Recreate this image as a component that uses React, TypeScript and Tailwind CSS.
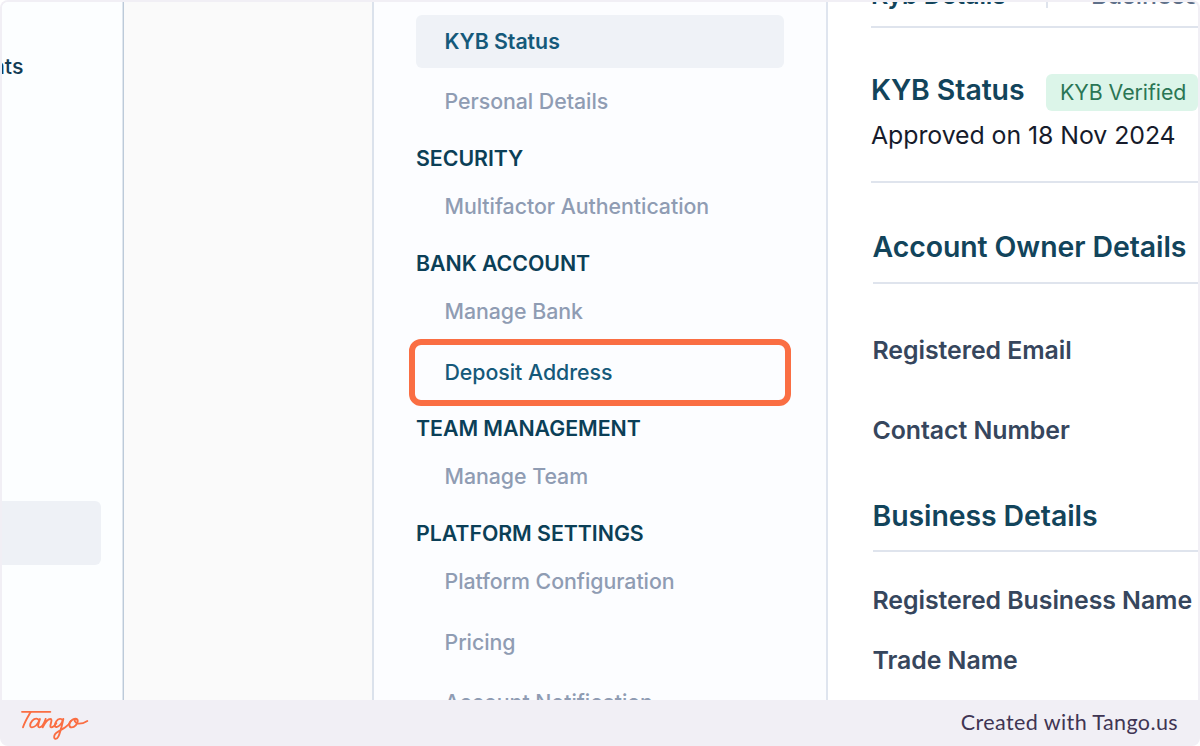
import type { ReactNode } from "react";

function Group({ children }: { children: ReactNode }) {
  return (
    <h3 className="mt-[16px] mb-[6px] flex h-[30px] shrink-0 items-center text-[21.33px] font-semibold tracking-[-0.04px] text-[#0b3f57]">
      {children}
    </h3>
  );
}

function Item({ children }: { children: ReactNode }) {
  return (
    <div className="flex h-[53px] shrink-0 items-center pl-[28.5px] text-[21.33px] font-medium tracking-[-0.04px] text-[#8f9cb3]">
      {children}
    </div>
  );
}

function Label({ children }: { children: ReactNode }) {
  return (
    <div className="flex h-[30px] shrink-0 items-center text-[24.89px] font-semibold tracking-[-0.06px] text-[#36465d]">
      {children}
    </div>
  );
}

function TangoLogo() {
  return (
    <svg
      width="90"
      height="46"
      viewBox="0 0 270 138"
      fill="none"
      stroke="#fa6e43"
      strokeWidth="5.6"
      strokeLinecap="round"
      strokeLinejoin="round"
      aria-label="Tango"
    >
      <path d="M36 35.500H121" />
      <path d="M62 36C54 50 44 66 39 82" />
      <path d="M88 63C84 53 74 54 67 62C59 71 58 82 66 82C75 82 84 71 90 57C86 68 81 82 88 82C95 82 103 68 107 57C104 66 100 75 98 82C104 70 113 57 121 57C131 57 115 82 124 82C130 82 135 76 139 70" />
      <path d="M158 62C155 54 145 55 139 64C132 75 133 82 140 81C148 80 156 68 160 57C156 75 152 96 145 110C140 120 130 118 133 107C136 95 153 91 166 82C175 76 179 70 182 63" />
      <path d="M200 57C189 54 179 64 178 74C178 85 190 84 197 76C204 68 206 58 198 57C190 58 194 70 207 71C217 71 226 67 232 63" />
    </svg>
  );
}

export default function App() {
  return (
    <div className="h-[746px] w-[1200px] overflow-hidden rounded-lg bg-[#f1eff5] px-[2px] pt-[2px] font-[Inter,sans-serif]">
      <div className="flex h-[698px] w-[1196px] overflow-hidden rounded-t-md bg-white">
        <aside className="flex w-[121px] shrink-0 flex-col overflow-hidden border-r border-[#dfe6ee] bg-[#fcfeff]">
          <div className="mt-[50px] -ml-[10px] flex h-[30px] items-center text-[21.33px] font-medium text-[#123c55]">nts</div>
          <div className="mt-[419px] h-[64px] w-[99px] shrink-0 rounded-r-md bg-[#eef1f6]" />
        </aside>
        <div className="w-[249px] shrink-0 border-l border-[#bccad9] bg-[#fafafa]" />
        <nav className="flex w-[456px] shrink-0 flex-col overflow-hidden border-r-2 border-l-2 border-r-[#dfe5ef] border-l-[#dbe2ec] bg-[#fcfdff] pt-[13px] pr-[42px] pl-[42px]">
          <div className="mb-[7px] flex h-[53px] shrink-0 items-center rounded-md bg-[#eff2f7] pl-[28.5px] text-[21.33px] font-semibold tracking-[-0.04px] text-[#15597a]">
            KYB Status
          </div>
          <Item>Personal Details</Item>
          <Group>SECURITY</Group>
          <Item>Multifactor Authentication</Item>
          <Group>BANK ACCOUNT</Group>
          <Item>Manage Bank</Item>
          <div className="-mx-[7px] mt-px -mb-[8px] flex h-[67px] shrink-0 items-center rounded-xl border-6 border-[#fa6e43] pl-[29.5px] text-[21.33px] font-medium tracking-[-0.04px] text-[#15597a]">
            Deposit Address
          </div>
          <Group>TEAM MANAGEMENT</Group>
          <Item>Manage Team</Item>
          <Group>PLATFORM SETTINGS</Group>
          <Item>Platform Configuration</Item>
          <div className="h-2 shrink-0" />
          <Item>Pricing</Item>
          <div className="h-[7px] shrink-0" />
          <Item>Account Notification</Item>
        </nav>
        <main className="flex w-[370px] shrink-0 flex-col overflow-hidden pl-[43px]">
          <div className="flex h-[26px] shrink-0 border-b-2 border-[#dfe4ed] text-[24.89px] leading-[30px]">
            <div className="-mt-[22px] w-[175px] shrink-0 font-semibold tracking-[-0.06px] text-[#12445b]">Kyb Details</div>
            <div className="h-[6px] w-[2px] shrink-0 bg-[#dfe4ed]" />
            <div className="-mt-[22px] ml-[43px] font-medium text-[#5f7089]">Business</div>
          </div>
          <div className="mt-[46px] flex h-[37px] shrink-0 items-center">
            <h1 className="-mt-[5px] w-[175px] shrink-0 text-[28.44px] font-semibold tracking-[-0.08px] text-[#12445b]">KYB Status</h1>
            <div className="flex h-[37px] w-[152px] shrink-0 items-center rounded-md bg-[#dcf5e9] pl-[14px] text-[21.33px] tracking-[-0.05px] text-[#2a7654]">
              KYB Verified
            </div>
          </div>
          <p className="mt-[8px] h-[32px] shrink-0 text-[24.89px] leading-[32px] tracking-[-0.07px] text-[#161b2b]">
            Approved on 18 Nov 2024
          </p>
          <div className="mt-[30px] h-[2px] shrink-0 bg-[#dfe4ed]" />
          <div className="ml-[1.5px] flex flex-col">
            <h2 className="mt-[46px] flex h-[36px] items-center text-[28.44px] font-semibold tracking-[-0.08px] text-[#12445b]">
              Account Owner Details
            </h2>
            <div className="mt-[17px] h-[2px] shrink-0 bg-[#dfe4ed]" />
            <div className="mt-[52px] flex flex-col gap-[50px]">
              <Label>Registered Email</Label>
              <Label>Contact Number</Label>
            </div>
            <h2 className="mt-[52px] flex h-[36px] items-center text-[28.44px] font-semibold tracking-[-0.08px] text-[#12445b]">
              Business Details
            </h2>
            <div className="mt-[16px] h-[2px] shrink-0 bg-[#dfe4ed]" />
            <div className="mt-[34px] flex flex-col gap-[30px]">
              <Label>Registered Business Name</Label>
              <Label>Trade Name</Label>
            </div>
          </div>
        </main>
      </div>
      <footer className="flex h-[46px] items-center justify-between pr-[20px] pl-[8px]">
        <TangoLogo />
        <span className="-mt-[2px] font-[Lato,sans-serif] text-[21.5px] tracking-[0.4px] text-[#3f3553]">
          Created with Tango.us
        </span>
      </footer>
    </div>
  );
}
